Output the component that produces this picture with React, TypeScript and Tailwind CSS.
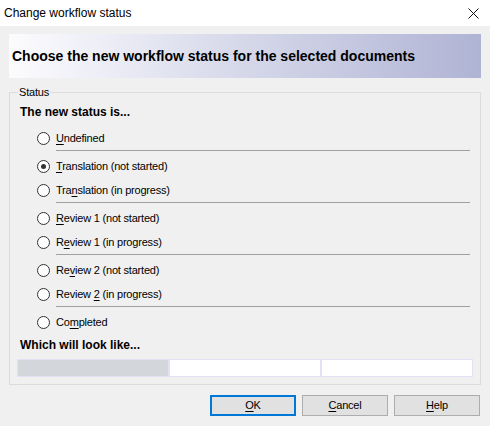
import React from "react";

const font = { fontFamily: '"Liberation Sans", Arial, sans-serif' };

function Mn({ text, idx }: { text: string; idx: number }) {
  return (
    <>
      {text.slice(0, idx)}
      <span className="underline underline-offset-[2px]">{text[idx]}</span>
      {text.slice(idx + 1)}
    </>
  );
}

function Radio({ label, idx, checked }: { label: string; idx: number; checked?: boolean }) {
  return (
    <div className="h-[24px] flex items-center pl-[27px]">
      <span className="w-[13px] h-[13px] rounded-full border border-[#333333] bg-white flex items-center justify-center shrink-0">
        {checked && <span className="w-[5px] h-[5px] rounded-full bg-[#333333]" />}
      </span>
      <span className="ml-[6px] text-[11px] leading-[13px] tracking-[-0.2px] text-black">
        <Mn text={label} idx={idx} />
      </span>
    </div>
  );
}

function Sep() {
  return <div className="ml-[46px] w-[414px] h-px bg-[#a0a0a0] mb-[3px]" />;
}

function Btn({ label, primary }: { label: string; primary?: boolean }) {
  return (
    <div
      className={
        "w-[86px] h-[21px] bg-[#e1e1e1] flex items-center justify-center text-[11px] tracking-[-0.2px] text-black " +
        (primary ? "border-2 border-[#0078d7]" : "border border-[#adadad]")
      }
    >
      <Mn text={label} idx={0} />
    </div>
  );
}

export default function App() {
  return (
    <div className="w-[490px] h-[426px] bg-[#f0f0f0] overflow-hidden" style={font}>
      <div className="h-[26px] bg-white flex items-center justify-between pl-[4px] pr-[11px]">
        <span className="text-[12px] text-black">Change workflow status</span>
        <svg width="11" height="11" viewBox="0 0 11 11">
          <path d="M0.5 0.5 L10.5 10.5 M10.5 0.5 L0.5 10.5" stroke="#111" strokeWidth="1" fill="none" />
        </svg>
      </div>

      <div className="mt-[8px] ml-[9px] w-[472px] h-[44px] bg-linear-to-r from-[#fcfcfe] to-[#b0b4d4] flex items-center pl-[3px]">
        <span className="text-[14px] font-bold text-black">
          Choose the new workflow status for the selected documents
        </span>
      </div>

      <div className="relative mt-[14px] ml-[9px] w-[472px] h-[293px] border border-[#dcdcdc]">
        <span className="absolute left-[8px] -top-[7px] px-[1px] bg-[#f0f0f0] text-[11px] leading-[13px] tracking-[-0.2px] text-black">
          Status
        </span>
        <div className="pt-[12px] pl-[10px] text-[12px] leading-[14px] font-bold text-black">
          The new status is...
        </div>
        <div className="mt-[7px]">
          <Radio label="Undefined" idx={0} />
          <Sep />
          <Radio label="Translation (not started)" idx={0} checked />
          <Radio label="Translation (in progress)" idx={3} />
          <Sep />
          <Radio label="Review 1 (not started)" idx={0} />
          <Radio label="Review 1 (in progress)" idx={1} />
          <Sep />
          <Radio label="Review 2 (not started)" idx={2} />
          <Radio label="Review 2 (in progress)" idx={7} />
          <Sep />
          <Radio label="Completed" idx={2} />
        </div>
        <div className="mt-[4px] pl-[10px] text-[12px] leading-[14px] font-bold text-black">
          Which will look like...
        </div>
        <div className="mt-[7px] ml-[7px] w-[456px] h-[18px] grid grid-cols-3">
          <div className="bg-[#d3d7dc] border border-[#e2e2f6]" />
          <div className="bg-white border border-[#e2e2f6]" />
          <div className="bg-white border border-[#e2e2f6]" />
        </div>
      </div>

      <div className="mt-[10px] flex justify-end gap-[6px] pr-[10px]">
        <Btn label="OK" primary />
        <Btn label="Cancel" />
        <Btn label="Help" />
      </div>
    </div>
  );
}
